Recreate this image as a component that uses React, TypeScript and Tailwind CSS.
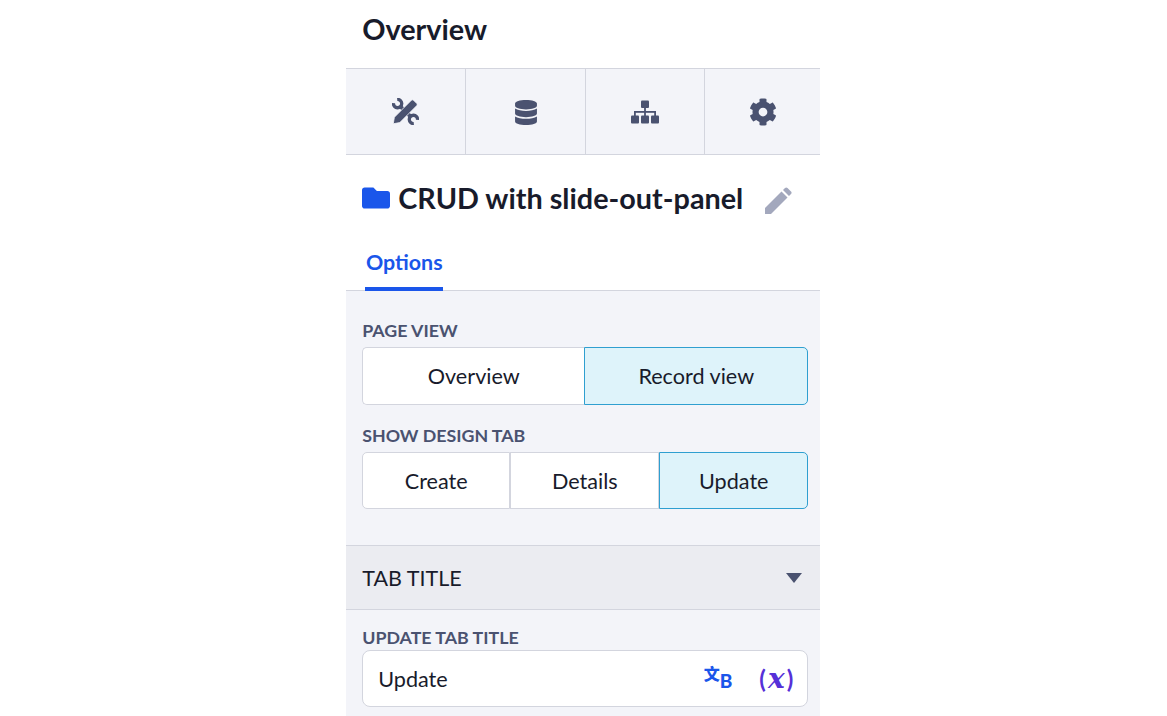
import React from "react";
import { FaCog, FaDatabase, FaFolder } from "react-icons/fa";

const ToolsIcon: React.FC = () => (
  <svg viewBox="0 0 26 26" className="w-[27px] h-[27px]" fill="none" stroke="#4a5270">
    {/* wrench, one head at each end */}
    <path d="M1.400 5A4 4 0 1 0 5 1.400" strokeWidth="3.2" />
    <path d="M24.600 21A4 4 0 1 0 21 24.600" strokeWidth="3.2" />
    <path d="M8 8L18 18" strokeWidth="3.6" />
    {/* pencil on top */}
    <path
      d="M1.200 24.800L2.300 18.500 18.500 2.300c.7-.7 1.700-.7 2.400 0l2.800 2.800c.7.7.7 1.700 0 2.400L7.500 23.700z"
      fill="#4a5270"
      stroke="#f3f4f9"
      strokeWidth="0.8"
    />
  </svg>
);

const SitemapIcon: React.FC = () => (
  <svg viewBox="0 0 28 24" className="w-[28px] h-[24px]" fill="#4a5270">
    <rect x="10" y="0.500" width="8" height="7.500" rx="1" />
    <rect x="0" y="15.500" width="8" height="8" rx="1" />
    <rect x="10" y="15.500" width="8" height="8" rx="1" />
    <rect x="20" y="15.500" width="8" height="8" rx="1" />
    <rect x="13.100" y="8" width="1.800" height="8" />
    <rect x="3" y="11" width="22" height="1.800" />
    <rect x="3" y="11" width="1.800" height="5" />
    <rect x="23.200" y="11" width="1.800" height="5" />
  </svg>
);

const PencilIcon: React.FC = () => (
  <svg viewBox="0 0 28 28" className="w-[28px] h-[28px]" fill="#a3a8bd">
    <path d="M0 27V21L16.500 4.500 22.500 10.500 6 27z" />
    <path d="M18 3L20 1c.8-.8 1.700-.8 2.500 0l3.500 3.500c.8.8.8 1.700 0 2.500L24 9z" />
  </svg>
);

const SegButton: React.FC<{ label: string; active?: boolean; className?: string }> = ({ label, active, className }) => (
  <div
    className={`flex items-center justify-center h-full pt-[1px] text-[21.6px] border ${
      active ? "bg-[#def3fa] border-[#2f9fd0] z-10" : "bg-white border-[#d3d5de]"
    } ${className ?? ""}`}
  >
    {label}
  </div>
);

const Label: React.FC<{ text: string; className?: string }> = ({ text, className }) => (
  <div className={`text-[17.8px] leading-[22px] font-bold text-[#4a5270] ${className ?? ""}`}>{text}</div>
);

export default function App() {
  return (
    <div className="h-[716px] overflow-hidden bg-white flex justify-center font-['Lato','Noto_Sans_CJK_SC',sans-serif] text-[#181b2b]">
      <div className="w-[474px] ml-[-0.5px] flex flex-col">
        <div className="h-[68px] shrink-0 pl-4 pt-[10px]">
          <h1 className="text-[28.8px] leading-[38px] font-bold">Overview</h1>
        </div>

        <div className="h-[87px] shrink-0 grid grid-cols-[120px_120px_119px_115px] bg-[#f3f4f9] border-y border-[#d3d5de] text-[#4a5270]">
          <div className="flex items-center justify-center border-r border-[#d3d5de]">
            <ToolsIcon />
          </div>
          <div className="flex items-center justify-center border-r border-[#d3d5de] pt-[2px]">
            <FaDatabase className="w-[22px] h-[25px]" />
          </div>
          <div className="flex items-center justify-center border-r border-[#d3d5de]">
            <SitemapIcon />
          </div>
          <div className="flex items-center justify-center pt-[1px]">
            <FaCog className="w-[28px] h-[28px]" />
          </div>
        </div>

        <div className="h-[136px] shrink-0 border-b border-[#d3d5de] flex flex-col">
          <div className="flex items-center pl-4 pt-[25px]">
            <FaFolder className="w-[28px] h-[28px] text-[#1a56ea]" />
            <span className="ml-[8px] text-[28.8px] leading-[36px] font-bold whitespace-nowrap">CRUD with slide-out-panel</span>
            <span className="ml-[22px] mt-[5px]">
              <PencilIcon />
            </span>
          </div>
          <div className="mt-auto mb-[-2px] ml-[19px] w-[78px] h-[46px] border-b-[5px] border-[#1a56ea] text-[#1a56ea] text-[21.4px] font-bold text-center leading-[32px]">
            Options
          </div>
        </div>

        <div className="flex-1 bg-[#f3f4f9] flex flex-col">
          <div className="px-4 pr-3 pt-[28px]">
            <Label text="PAGE VIEW" />
            <div className="mt-[6px] h-[58px] flex">
              <SegButton label="Overview" className="flex-1 rounded-l-[5px] border-r-0" />
              <SegButton label="Record view" active className="w-[224px] rounded-r-[5px]" />
            </div>
            <Label text="SHOW DESIGN TAB" className="mt-[19px]" />
            <div className="mt-[6px] h-[57px] flex">
              <SegButton label="Create" className="w-[148px] rounded-l-[5px]" />
              <SegButton label="Details" className="w-[149px]" />
              <SegButton label="Update" active className="flex-1 rounded-r-[5px]" />
            </div>
          </div>

          <div className="mt-[36px] h-[65px] shrink-0 bg-[#ebecf1] border-y border-[#d3d5de] flex items-center justify-between pl-4 pr-[18px]">
            <span className="text-[21.5px] pt-[1px]">TAB TITLE</span>
            <span className="w-0 h-0 border-x-[8px] border-x-transparent border-t-[10px] border-t-[#4a5270]" />
          </div>

          <div className="px-4 pr-3 pt-[16px]">
            <Label text="UPDATE TAB TITLE" />
            <div className="mt-[2px] h-[57px] bg-white border border-[#d3d5de] rounded-[8px] flex items-center pl-[15px] pr-[14px]">
              <span className="text-[21.6px] flex-1 pt-[1px]">Update</span>
              <span className="flex items-start text-[#1a56ea] font-bold mr-[27px]">
                <span className="text-[16px] leading-[20px] mt-[-2px] font-black">文</span>
                <span className="text-[19px] leading-[20px] mt-[5px] font-black">B</span>
              </span>
              <span className="flex items-center text-[#5630d8] text-[24px] font-bold whitespace-nowrap">
                <span>(</span>
                <span className="font-['DejaVu_Serif',serif] italic text-[28px] leading-none mx-[2px]">x</span>
                <span>)</span>
              </span>
            </div>
          </div>
        </div>
      </div>
    </div>
  );
}
